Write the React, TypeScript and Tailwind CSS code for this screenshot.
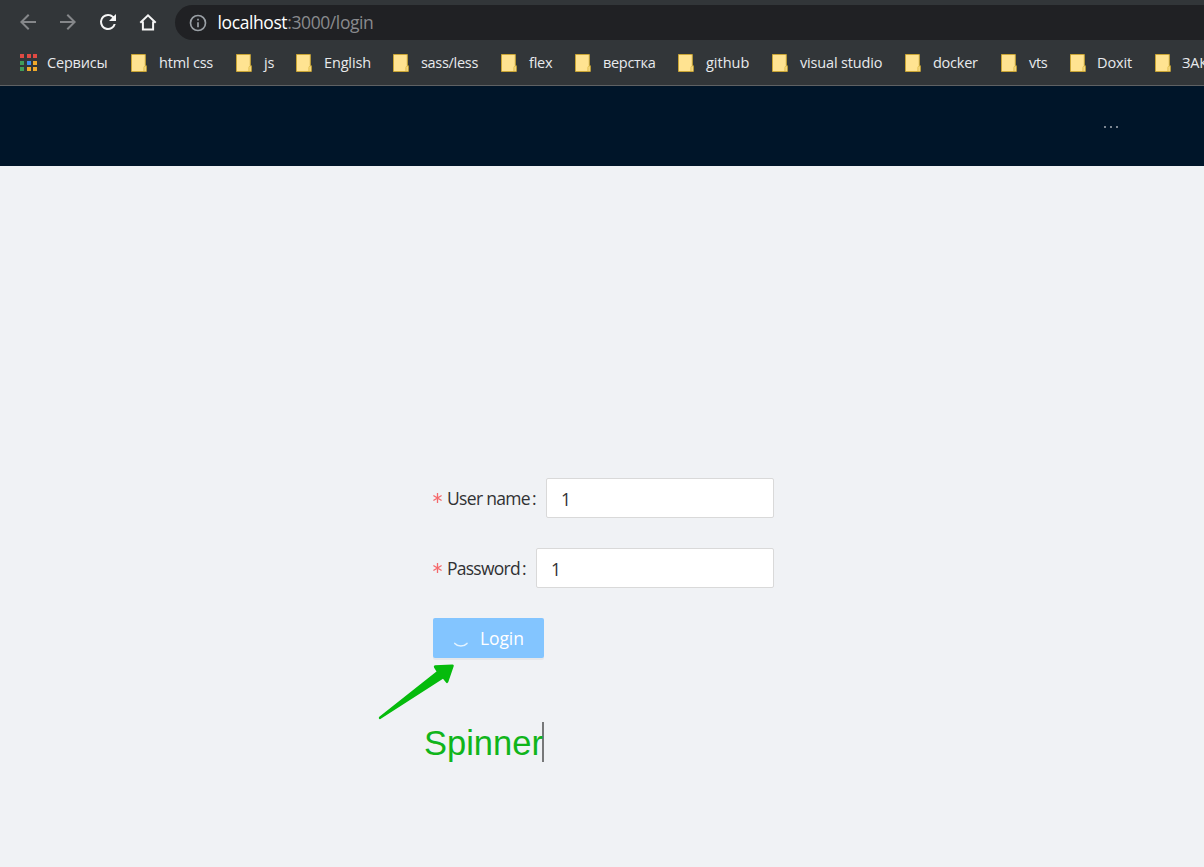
import type { ReactNode } from "react";

const bookmarks = [
  { label: "html css", width: "w-[105px]", text: "tracking-[-0.2px]" },
  { label: "js", width: "w-[60px]", text: "tracking-[-0.2px]" },
  { label: "English", width: "w-[97px]", text: "tracking-[-0.15px]" },
  { label: "sass/less", width: "w-[108px]", text: "tracking-[-0.3px]" },
  { label: "flex", width: "w-[74px]", text: "tracking-[-0.25px]" },
  { label: "верстка", width: "w-[103px]", text: "tracking-[-0.3px]" },
  { label: "github", width: "w-[94px]", text: "tracking-[0px]" },
  { label: "visual studio", width: "w-[133px]", text: "tracking-[-0.17px]" },
  { label: "docker", width: "w-[96px]", text: "tracking-[-0.25px]" },
  { label: "vts", width: "w-[69px]", text: "tracking-[-0.3px]" },
  { label: "Doxit", width: "w-[85px]", text: "-ml-px tracking-[-0.1px]" },
  { label: "ЗАКАЗЫ", width: "w-[105px]", text: "-ml-px tracking-[-0.2px]" },
];

const appDots = [
  "bg-[#e04a43]", "bg-[#e04a43]", "bg-[#e04a43]",
  "bg-[#3f9d5a]", "bg-[#3b8cf0]", "bg-[#f0a92b]",
  "bg-[#3f9d5a]", "bg-[#f0a92b]", "bg-[#f0a92b]",
];

function NavIcon({ children, className }: { children: ReactNode; className: string }) {
  return (
    <svg viewBox="0 0 24 24" className={`h-6 w-6 shrink-0 ${className}`} fill="currentColor">
      {children}
    </svg>
  );
}

function Folder() {
  return (
    <svg viewBox="0 0 16 18" className="h-[18px] w-4 shrink-0">
      <path d="M.5.5h13.8v11.2h1v5.8H.5z" fill="#ffe391" stroke="#c9a535" />
      <path d="M13 17v-3.5q0-1.3 1.5-1.5" fill="none" stroke="#dcb843" />
    </svg>
  );
}

function Toolbar() {
  return (
    <div className="flex h-[45px] items-center pl-[15.5px]">
      <div className="flex gap-4 pb-px">
        <NavIcon className="text-[#85878a]">
          <path d="M20 11H7.83l5.59-5.59L12 4l-8 8 8 8 1.41-1.41L7.83 13H20v-2z" />
        </NavIcon>
        <NavIcon className="text-[#85878a]">
          <path d="M12 4l-1.41 1.41L16.17 11H4v2h12.17l-5.58 5.59L12 20l8-8z" />
        </NavIcon>
        <NavIcon className="text-[#f5f5f5]">
          <path d="M17.65 6.35A7.96 7.96 0 0 0 12 4a8 8 0 1 0 7.73 10h-2.08A6 6 0 1 1 12 6c1.66 0 3.14.69 4.22 1.78L13 11h7V4l-2.35 2.35z" />
        </NavIcon>
        <NavIcon className="text-[#f5f5f5]">
          <path d="M4.3 12.8 12 5.3l7.7 7.5M6.9 11.5v8.1h10.2v-8.1" fill="none" stroke="currentColor" strokeWidth="2" />
        </NavIcon>
      </div>
      <div className="ml-[15.5px] flex h-[35px] grow items-center rounded-l-full bg-[#202124] pl-[12.5px]">
        <svg viewBox="0 0 24 24" className="h-5 w-5" fill="#9aa0a6">
          <path d="M11 7h2v2h-2zm0 4h2v6h-2zm1-9a10 10 0 1 0 0 20 10 10 0 0 0 0-20zm0 18a8 8 0 1 1 0-16 8 8 0 0 1 0 16z" />
        </svg>
        <span className="ml-[10px] pb-px text-[17.5px] leading-6 tracking-[-0.4px] text-[#898a8d]">
          <span className="text-white">localhost</span>:3000/login
        </span>
      </div>
    </div>
  );
}

function Bookmarks() {
  return (
    <div className="flex h-10 items-center overflow-hidden pb-[5px] pl-5 text-[14.5px] leading-5 text-[#e8eaed]">
      <div className="flex w-[111px] shrink-0 items-center">
        <div className="grid grid-cols-3 gap-x-[2.5px] gap-y-[2.5px]">
          {appDots.map((color, i) => (
            <i key={i} className={`h-1 w-1 ${color}`} />
          ))}
        </div>
        <span className="ml-[10px] tracking-[-0.2px]">Сервисы</span>
      </div>
      {bookmarks.map((b) => (
        <div key={b.label} className={`flex shrink-0 items-center gap-3 ${b.width}`}>
          <Folder />
          <span className={`whitespace-nowrap ${b.text}`}>{b.label}</span>
        </div>
      ))}
    </div>
  );
}

function Field({ label, className, text }: { label: string; className: string; text: string }) {
  return (
    <label className="flex h-10 items-center text-[17.5px] text-[#303133]">
      <span className={`flex shrink-0 items-center ${className}`}>
        <svg viewBox="0 0 9 10" className="mr-[5px] h-[10px] w-[9px]" stroke="#f5696b" strokeWidth="1.3">
          <path d="M4.5 0v10M.4 2.5l8.2 5M8.6 2.5l-8.2 5" />
        </svg>
        <span className={`pt-px ${text}`}>{label}</span>
        <span className="ml-[2px] pt-px">:</span>
      </span>
      <input
        defaultValue="1"
        className="h-10 min-w-0 grow rounded-[2px] border border-[#d9d9d9] bg-white px-[14px] pt-px text-[17.5px] outline-none"
      />
    </label>
  );
}

export default function App() {
  return (
    <div className="h-[867px] w-[1204px] overflow-hidden bg-[#f0f2f5] font-['Open_Sans','Noto_Sans',sans-serif]">
      <div className="h-[86px] border-b border-[#5f6163] bg-[#323639]">
        <Toolbar />
        <Bookmarks />
      </div>
      <header className="flex h-20 items-center justify-end gap-[4px] bg-[#001529] pt-[2px] pr-[86px]">
        <i className="h-[2px] w-[2px] rounded-full bg-[#a6adb4]" />
        <i className="h-[2px] w-[2px] rounded-full bg-[#a6adb4]" />
        <i className="h-[2px] w-[2px] rounded-full bg-[#a6adb4]" />
      </header>
      <main className="pt-[312px] pl-[433px]">
        <form className="flex w-[341px] flex-col gap-[30px]">
          <Field label="User name" className="w-[113px]" text="tracking-[-0.68px]" />
          <Field label="Password" className="w-[103px]" text="tracking-[-0.75px]" />
          <button type="button" className="flex h-10 w-[111px] items-center rounded-[2px] bg-[#83c5ff] pl-5 text-[17.5px] text-white shadow-[0_2px_0_rgba(0,0,0,0.045)]">
            <svg viewBox="0 0 16 8" className="mt-[14px] h-2 w-4" fill="none" stroke="#e3f3ff" strokeWidth="1.5" strokeLinecap="round">
              <path d="M1.8 2.4c3.3 3.6 8.9 3.6 12.2 0" />
            </svg>
            <span className="ml-[11px] pt-px tracking-[-0.1px]">Login</span>
          </button>
        </form>
        <div className="mt-[5px] -ml-[55px]">
          <svg viewBox="0 0 80 58" className="h-[58px] w-20" fill="#05bb0c">
            <path d="M1.3 53.7 58.5 8.5 56 4.5Q55.2 2.6 57 2.2L74.5 1.5Q76.3 1.6 75.7 3.3L70.3 19Q69.2 21.2 67.8 19.2L65 15.8 3.2 55.6Q1.8 56.7 1 55.7 .4 54.6 1.3 53.7Z" />
          </svg>
        </div>
        <div className="mt-[1px] -ml-[9px] flex h-10 w-[120px] items-center border-r-2 border-[#777879] pt-[3px] font-['Liberation_Sans',sans-serif] text-[34.5px] text-[#10b51b]">
          Spinner
        </div>
      </main>
    </div>
  );
}
